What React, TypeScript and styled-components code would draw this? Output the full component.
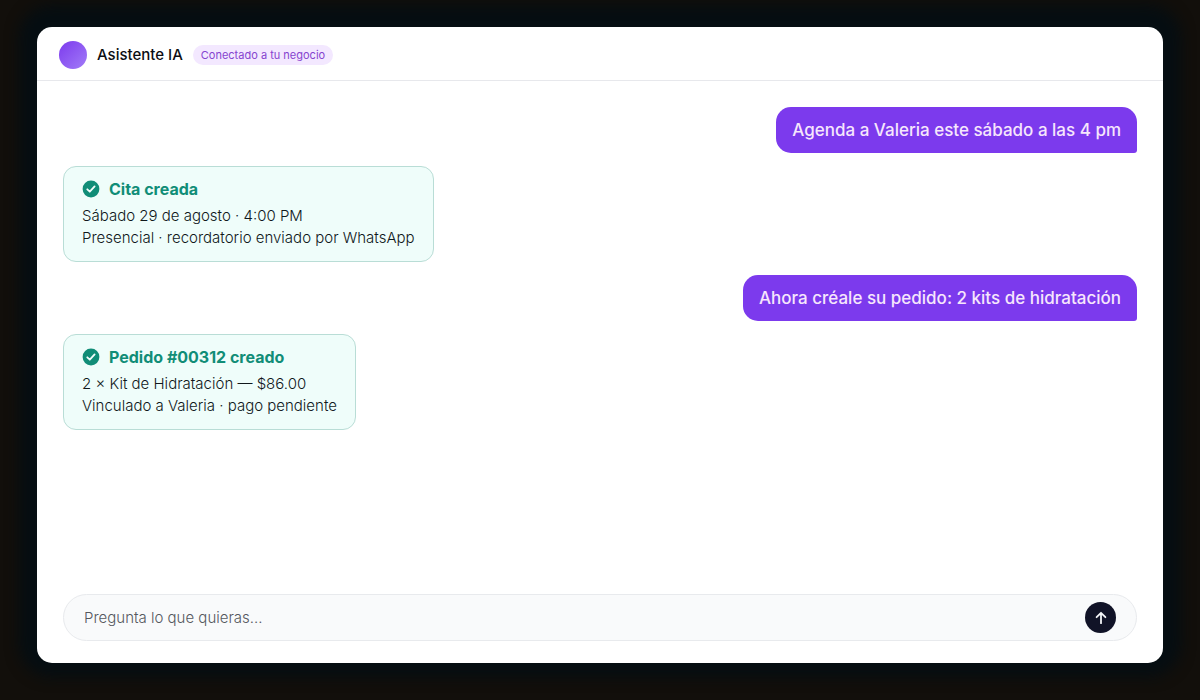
import React from 'react';
import styled, { createGlobalStyle } from 'styled-components';

const GlobalStyle = createGlobalStyle`
  *, *::before, *::after { box-sizing: border-box; }
  body {
    margin: 0;
    background: #120f0b;
    font-family: Inter, "Liberation Sans", sans-serif;
  }
`;

const Page = styled.div`
  display: flex;
  min-height: 100vh;
  padding: 27px 37px 37px;
`;

const Panel = styled.main`
  flex: 1;
  min-width: 0;
  display: flex;
  flex-direction: column;
  background: #ffffff;
  border-radius: 15px;
  box-shadow: 0 -4px 14px 18px #060e12;
`;

const Header = styled.header`
  display: flex;
  align-items: center;
  gap: 10px;
  height: 54px;
  padding: 2px 22px 0;
  border-bottom: 1px solid #e7e8ec;
`;

const Avatar = styled.span`
  width: 28px;
  height: 28px;
  border-radius: 50%;
  background: linear-gradient(135deg, #7c3aed, #a27cf8);
`;

const Title = styled.h1`
  margin: 0;
  font-size: 15px;
  line-height: 20px;
  font-weight: 500;
  color: #0c0d12;
`;

const Status = styled.span`
  padding: 0 8px;
  border-radius: 10px;
  background: #f3e8ff;
  color: #8644cf;
  font-size: 11px;
  line-height: 20px;
`;

const Conversation = styled.section`
  flex: 1;
  display: flex;
  flex-direction: column;
  align-items: flex-start;
  gap: 13px;
  padding: 26px;
`;

const Bubble = styled.p`
  align-self: flex-end;
  margin: 0;
  padding: 10px 16px;
  border-radius: 15px 15px 3px 15px;
  background: #7c3aed;
  color: #f6e6fc;
  font-size: 17px;
  font-weight: 500;
  line-height: 26px;
`;

const ResultCard = styled.article`
  padding: 10px 18px 12px;
  border: 1px solid #b9ddd6;
  border-radius: 13px;
  background: #effdfa;
`;

const ResultTitle = styled.h2`
  display: flex;
  align-items: center;
  gap: 9px;
  margin: 0 0 4px;
  font-size: 16px;
  line-height: 24px;
  font-weight: 700;
  color: #118d77;
`;

const ResultLine = styled.p`
  margin: 0;
  font-size: 15px;
  font-weight: 300;
  line-height: 22px;
  color: #10181b;
`;

const Composer = styled.form`
  display: flex;
  align-items: center;
  height: 47px;
  margin: 0 26px 22px;
  padding: 0 20px;
  border: 1px solid #e8eaed;
  border-radius: 24px;
  background: #f9fafb;
`;

const Prompt = styled.input`
  flex: 1;
  min-width: 0;
  padding: 0;
  border: 0;
  outline: 0;
  background: transparent;
  font: inherit;
  font-size: 15px;
  font-weight: 300;
  line-height: 22px;
  color: #10181b;
  &::placeholder { color: #55585e; opacity: 1; }
`;

const SendButton = styled.button`
  display: grid;
  place-items: center;
  width: 31px;
  height: 31px;
  padding: 0;
  border: 0;
  border-radius: 50%;
  background: #111327;
  color: #f4f5f8;
  cursor: pointer;
`;

function CheckIcon() {
  return (
    <svg width="18" height="18" viewBox="0 0 18 18" aria-hidden="true">
      <circle cx="9" cy="9" r="8.4" fill="#118d77" />
      <path d="M5.3 9.3 7.8 11.7 12.6 6.4" fill="none" stroke="#f2fdfb" strokeWidth="1.8" strokeLinecap="round" strokeLinejoin="round" />
    </svg>
  );
}

function ArrowIcon() {
  return (
    <svg width="16" height="16" viewBox="0 0 16 16" aria-hidden="true">
      <path d="M8 13.2V3M3.6 7.2 8 2.8l4.4 4.4" fill="none" stroke="currentColor" strokeWidth="1.8" strokeLinecap="round" strokeLinejoin="round" />
    </svg>
  );
}

function Result({ title, lines }: { title: string; lines: string[] }) {
  return (
    <ResultCard>
      <ResultTitle><CheckIcon />{title}</ResultTitle>
      {lines.map((line) => <ResultLine key={line}>{line}</ResultLine>)}
    </ResultCard>
  );
}

export default function App() {
  return (
    <>
      <GlobalStyle />
      <Page>
        <Panel>
          <Header>
            <Avatar />
            <Title>Asistente IA</Title>
            <Status>Conectado a tu negocio</Status>
          </Header>
          <Conversation>
            <Bubble>Agenda a Valeria este sábado a las 4 pm</Bubble>
            <Result
              title="Cita creada"
              lines={['Sábado 29 de agosto · 4:00 PM', 'Presencial · recordatorio enviado por WhatsApp']}
            />
            <Bubble>Ahora créale su pedido: 2 kits de hidratación</Bubble>
            <Result
              title="Pedido #00312 creado"
              lines={['2 × Kit de Hidratación — $86.00', 'Vinculado a Valeria · pago pendiente']}
            />
          </Conversation>
          <Composer onSubmit={(event) => event.preventDefault()}>
            <Prompt type="text" aria-label="Pregunta" placeholder="Pregunta lo que quieras..." />
            <SendButton type="submit" aria-label="Enviar"><ArrowIcon /></SendButton>
          </Composer>
        </Panel>
      </Page>
    </>
  );
}
